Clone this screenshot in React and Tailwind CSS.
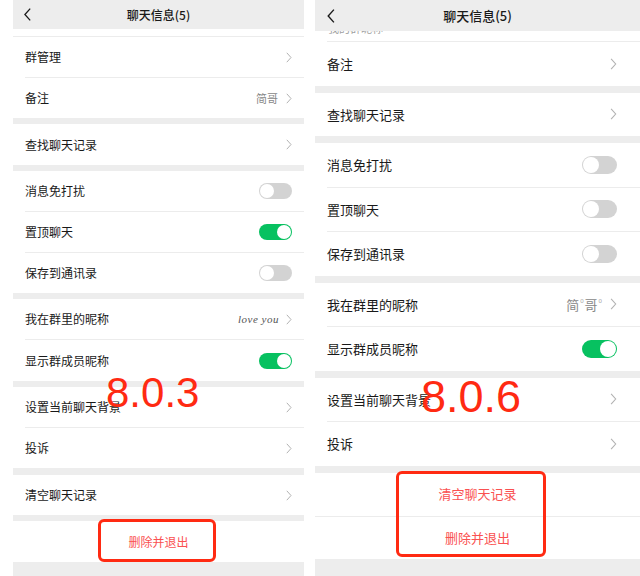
import React from "react";

// 一行设置项
function Chevron({ big }) {
  return (
    <svg
      className={big ? "w-[7px] h-[12px]" : "w-[6px] h-[11px]"}
      viewBox="0 0 6 11"
      fill="none"
      stroke="#b2b2b2"
      strokeWidth="1"
    >
      <polyline points="0.8,0.8 5,5.5 0.8,10.2" />
    </svg>
  );
}

function Toggle({ on, big }) {
  return (
    <div
      className={`${big ? "w-[35px] h-[18px]" : "w-[33px] h-[16px]"} rounded-full p-[1px] flex ${
        on ? "bg-[#07c160] justify-end" : "bg-[#d3d3d3] justify-start"
      }`}
    >
      <div className="h-full aspect-square rounded-full bg-white" />
    </div>
  );
}

function Row({ label, right, rowClass, textClass, last }) {
  return (
    <div className="bg-white">
      <div className={`flex items-center justify-between pl-[12px] ${rowClass}`}>
        <span className={`text-[#191919] ${textClass}`}>{label}</span>
        {right}
      </div>
      {!last && <div className="ml-[12px] h-px bg-[#ececec]" />}
    </div>
  );
}

function Back({ big }) {
  return (
    <svg
      className={big ? "w-[8px] h-[14px]" : "w-[7px] h-[13px]"}
      viewBox="0 0 7 13"
      fill="none"
      stroke="#1a1a1a"
      strokeWidth="1.3"
    >
      <polyline points="6.2,0.6 0.9,6.5 6.2,12.4" />
    </svg>
  );
}

function LeftPanel() {
  const r = "h-[40px] pr-[12px]";
  const r41 = "h-[41px] pr-[12px]";
  const t = "text-[12px]";
  const gap = <div className="h-[6px]" />;
  return (
    <div className="relative w-[291px] h-[576px] bg-[#ededed] overflow-hidden">
      <div className="h-[29px] flex items-center relative">
        <div className="pl-[11px] flex items-center">
          <Back />
        </div>
        <div className="absolute inset-0 flex items-center justify-center text-[12px] font-medium text-[#191919]">
          聊天信息(5)
        </div>
      </div>
      <div className="h-[8px] bg-white border-b border-[#ececec]" />

      <Row label="群管理" rowClass={r} textClass={t} right={<Chevron />} />
      <Row
        label="备注"
        rowClass={r}
        textClass={t}
        last
        right={
          <div className="flex items-center gap-[8px]">
            <span className="text-[11px] text-[#888888]">简哥</span>
            <Chevron />
          </div>
        }
      />
      {gap}
      <Row label="查找聊天记录" rowClass={r41} textClass={t} last right={<Chevron />} />
      {gap}
      <Row label="消息免打扰" rowClass={r} textClass={t} right={<Toggle />} />
      <Row label="置顶聊天" rowClass={r} textClass={t} right={<Toggle on />} />
      <Row label="保存到通讯录" rowClass={r} textClass={t} last right={<Toggle />} />
      {gap}
      <Row
        label="我在群里的昵称"
        rowClass={r}
        textClass={t}
        right={
          <div className="flex items-center gap-[7px]">
            <span className="text-[11px] italic text-[#555555] font-['Liberation_Serif',serif] tracking-[0.5px]">
              love you
            </span>
            <Chevron />
          </div>
        }
      />
      <Row label="显示群成员昵称" rowClass={r41} textClass={t} last right={<Toggle on />} />
      {gap}
      <Row label="设置当前聊天背景" rowClass={r} textClass={t} right={<Chevron />} />
      <Row label="投诉" rowClass={r} textClass={t} last right={<Chevron />} />
      <div className="h-[7px]" />
      <Row label="清空聊天记录" rowClass={r} textClass={t} last right={<Chevron />} />
      {gap}
      <div className="h-[41px] bg-white flex items-center justify-center text-[12px] text-[#fa5151]">
        删除并退出
      </div>

      <div className="absolute left-[93px] top-[372px] text-[42px] leading-none text-[#ff2a12] font-['Liberation_Sans',sans-serif]">
        8.0.3
      </div>
      <div className="absolute left-[85px] top-[519px] w-[118px] h-[43px] border-[3px] border-[#ff2a12] rounded-[6px]" />
    </div>
  );
}

function RightPanel() {
  const r = "h-[43.5px] pr-[23px]";
  const t = "text-[13px]";
  const gap = <div className="h-[7px]" />;
  return (
    <div className="relative w-[325px] h-[576px] bg-[#ededed] overflow-hidden">
      <div className="h-[31px] flex items-center relative">
        <div className="pl-[12px] flex items-center">
          <Back big />
        </div>
        <div className="absolute inset-0 flex items-center justify-center text-[13px] font-medium text-[#191919]">
          聊天信息(5)
        </div>
      </div>
      <div className="h-[11px] bg-white">
        <div className="ml-[13px] h-[10px] overflow-hidden">
          <div className="-mt-[10px] text-[11px] leading-[14px] text-[#a0a0a0]">我的群昵称</div>
        </div>
        <div className="ml-[12px] h-px bg-[#ececec]" />
      </div>

      <Row label="备注" rowClass={r} textClass={t} last right={<Chevron big />} />
      {gap}
      <Row label="查找聊天记录" rowClass={r} textClass={t} last right={<Chevron big />} />
      {gap}
      <Row label="消息免打扰" rowClass={r} textClass={t} right={<Toggle big />} />
      <Row label="置顶聊天" rowClass={r} textClass={t} right={<Toggle big />} />
      <Row label="保存到通讯录" rowClass={r} textClass={t} last right={<Toggle big />} />
      {gap}
      <Row
        label="我在群里的昵称"
        rowClass={r}
        textClass={t}
        right={
          <div className="flex items-center gap-[8px]">
            <span className="text-[13px] text-[#888888]">
              简<sup className="text-[9px] text-[#aaaaaa] mx-[1px]">ᵒ</sup>哥<sup className="text-[9px] text-[#aaaaaa] ml-[1px]">ᵒ</sup>
            </span>
            <Chevron big />
          </div>
        }
      />
      <Row label="显示群成员昵称" rowClass={r} textClass={t} last right={<Toggle on big />} />
      {gap}
      <Row label="设置当前聊天背景" rowClass={r} textClass={t} right={<Chevron big />} />
      <Row label="投诉" rowClass={r} textClass={t} last right={<Chevron big />} />
      {gap}
      <div className="h-[43px] bg-white flex items-center justify-center text-[13px] text-[#fa5151]">
        清空聊天记录
      </div>
      <div className="h-px bg-[#ececec]" />
      <div className="h-[42px] bg-white flex items-center justify-center text-[13px] text-[#fa5151]">
        删除并退出
      </div>

      <div className="absolute left-[106px] top-[374px] text-[45px] leading-none text-[#ff2a12] font-['Liberation_Sans',sans-serif]">
        8.0.6
      </div>
      <div className="absolute left-[81px] top-[471px] w-[150px] h-[86px] border-[3px] border-[#ff2a12] rounded-[6px]" />
    </div>
  );
}

export default function App() {
  return (
    <div className="w-[640px] h-[576px] bg-white flex font-['Noto_Sans_CJK_SC','Liberation_Sans',sans-serif] overflow-hidden">
      <div className="w-[13px]" />
      <LeftPanel />
      <div className="w-[11px]" />
      <RightPanel />
    </div>
  );
}
